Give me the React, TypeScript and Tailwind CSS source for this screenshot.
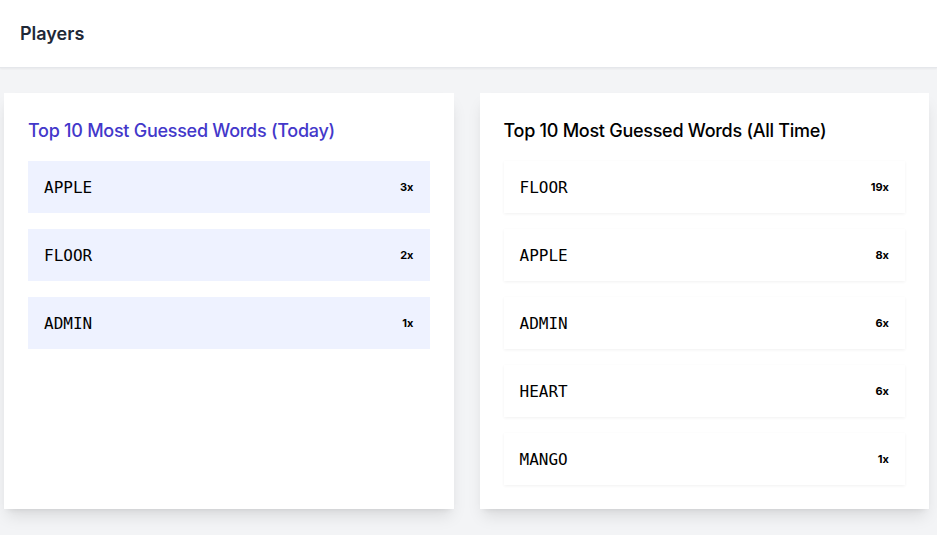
const today = [
  { word: "APPLE", count: 3 },
  { word: "FLOOR", count: 2 },
  { word: "ADMIN", count: 1 },
];

const allTime = [
  { word: "FLOOR", count: 19 },
  { word: "APPLE", count: 8 },
  { word: "ADMIN", count: 6 },
  { word: "HEART", count: 6 },
  { word: "MANGO", count: 1 },
];

interface WordRowProps {
  word: string;
  count: number;
  highlight?: boolean;
}

const WordRow = ({ word, count, highlight }: WordRowProps) => (
  <div
    className={
      highlight
        ? "flex h-[52px] items-center justify-between bg-[#eef2ff] px-4"
        : "flex h-[52px] items-center justify-between bg-white px-4 shadow-[0_1px_3px_rgba(0,0,0,0.06)]"
    }
  >
    <span className="pt-[1px] font-['DejaVu_Sans_Mono',monospace] text-[16px] text-black">
      {word}
    </span>
    <span className="text-[11px] font-bold text-black">{count}x</span>
  </div>
);

export default function App() {
  return (
    <div className="min-h-[535px] bg-[#f3f4f6] font-['Inter',sans-serif]">
      {/* cabeçalho */}
      <header className="flex h-[68px] items-center border-b border-[#e5e7eb] bg-white px-5 shadow-[0_1px_2px_rgba(0,0,0,0.05)]">
        <h1 className="text-lg font-semibold text-[#1f2937]">Players</h1>
      </header>

      <div className="grid grid-cols-2 gap-[26px] pl-1 pr-2 pt-[25px] pb-6">
        <div className="bg-white p-6 shadow-lg">
          <h2 className="mb-4 text-lg font-medium leading-7 tracking-[-0.015em] text-[#4338ca]">
            Top 10 Most Guessed Words (Today)
          </h2>
          <div className="flex flex-col gap-4">
            {today.map((w) => (
              <WordRow key={w.word} word={w.word} count={w.count} highlight />
            ))}
          </div>
        </div>

        <div className="bg-white p-6 shadow-lg">
          <h2 className="mb-4 text-lg font-medium leading-7 tracking-[-0.015em] text-black">
            Top 10 Most Guessed Words (All Time)
          </h2>
          <div className="flex flex-col gap-4">
            {allTime.map((w) => (
              <WordRow key={w.word} word={w.word} count={w.count} />
            ))}
          </div>
        </div>
      </div>
    </div>
  );
}
